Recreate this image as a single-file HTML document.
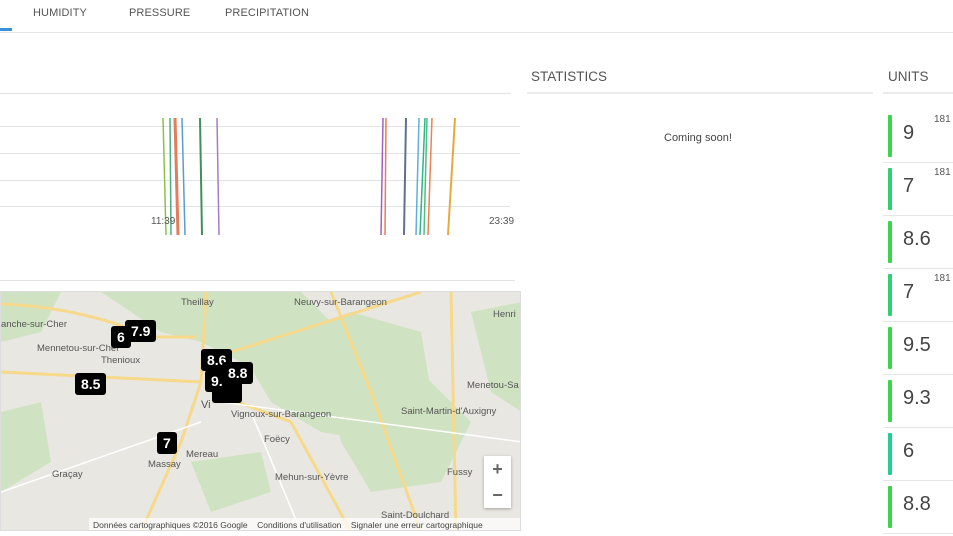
<!DOCTYPE html>
<html><head><meta charset="utf-8"><style>
*{margin:0;padding:0;box-sizing:border-box}
body{width:953px;height:536px;overflow:hidden;background:#fff;font-family:"Liberation Sans",sans-serif;position:relative;color:#444}
.abs{position:absolute}
.tab{position:absolute;top:7px;font-size:11px;color:#555;letter-spacing:.1px}
.h{position:absolute;font-size:13.5px;color:#555}
.row{position:absolute;left:883px;width:70px;height:53px;border-bottom:1px solid #e6e6e6}
.bar{position:absolute;left:5px;top:5px;width:4px;height:42px;background:#3ad64a;border-radius:1px}
.num{position:absolute;left:20px;top:12px;font-size:20px;color:#444}
.sup{position:absolute;left:51px;top:4px;font-size:10px;color:#555}
.mk{position:absolute;background:#000;color:#fff;font-weight:bold;font-size:14px;border-radius:3px;padding:3px 6px;line-height:16px}
.ml{position:absolute;font-size:9.5px;color:#555;white-space:nowrap}
</style></head><body>
<div class="tab" style="left:33px">HUMIDITY</div>
<div class="tab" style="left:129px">PRESSURE</div>
<div class="tab" style="left:225px">PRECIPITATION</div>
<div class="abs" style="left:0;top:32px;width:953px;height:1px;background:#e4e4e4"></div>
<div class="abs" style="left:0;top:28px;width:12px;height:3px;background:#3b8fd6"></div>

<svg class="abs" style="left:0;top:85px" width="522" height="200">
<g stroke="#e3e3e3" stroke-width="1">
<line x1="0" y1="8.5" x2="511" y2="8.5"/><line x1="0" y1="41.5" x2="520" y2="41.5"/><line x1="0" y1="68.5" x2="520" y2="68.5"/><line x1="0" y1="95.5" x2="520" y2="95.5"/><line x1="0" y1="121.5" x2="510" y2="121.5"/><line x1="0" y1="195.5" x2="515" y2="195.5"/>
</g>
<g stroke-width="1.5" fill="none">
<line x1="163" y1="33" x2="166" y2="150" stroke="#8bc34a"/>
<line x1="170" y1="33" x2="171" y2="150" stroke="#4caf80"/>
<line x1="175" y1="33" x2="178" y2="150" stroke="#e57c5b" stroke-width="3"/>
<line x1="182" y1="33" x2="185" y2="150" stroke="#5b9bd5"/>
<line x1="200" y1="33" x2="202" y2="150" stroke="#3f8f5f" stroke-width="2"/>
<line x1="217" y1="33" x2="219" y2="150" stroke="#a57cc8"/>
<line x1="383" y1="33" x2="381" y2="150" stroke="#a060c0"/>
<line x1="386" y1="33" x2="385" y2="150" stroke="#e57c5b"/>
<line x1="406" y1="33" x2="404" y2="150" stroke="#607090" stroke-width="2"/>
<line x1="419" y1="33" x2="416" y2="150" stroke="#5bb0e0"/>
<line x1="425" y1="33" x2="420" y2="150" stroke="#2fb58a"/>
<line x1="427" y1="33" x2="424" y2="150" stroke="#4cc080"/>
<line x1="432" y1="33" x2="428" y2="150" stroke="#f08050"/>
<line x1="455" y1="33" x2="448" y2="150" stroke="#e8a840" stroke-width="2"/>
</g>
<text x="151" y="139" font-size="10" fill="#555" font-family="Liberation Sans">11:39</text>
<text x="489" y="139" font-size="10" fill="#555" font-family="Liberation Sans">23:39</text>
</svg>

<div class="h" style="left:531px;top:69px">STATISTICS</div>
<div class="abs" style="left:527px;top:92px;width:346px;height:2px;background:#ececec"></div>
<div class="abs" style="left:664px;top:132px;font-size:11px;color:#444">Coming soon!</div>
<div class="h" style="left:888px;top:69px">UNITS</div>
<div class="abs" style="left:883px;top:92px;width:70px;height:2px;background:#ececec"></div>

<div class="row" style="top:110px"><div class="bar"></div><div class="num">9</div><div class="sup">181</div></div>
<div class="row" style="top:163px"><div class="bar" style="background:#2fd070"></div><div class="num">7</div><div class="sup">181</div></div>
<div class="row" style="top:216px"><div class="bar"></div><div class="num">8.6</div></div>
<div class="row" style="top:269px"><div class="bar" style="background:#2fd070"></div><div class="num">7</div><div class="sup">181</div></div>
<div class="row" style="top:322px"><div class="bar"></div><div class="num">9.5</div></div>
<div class="row" style="top:375px"><div class="bar"></div><div class="num">9.3</div></div>
<div class="row" style="top:428px"><div class="bar" style="background:#20d090"></div><div class="num">6</div></div>
<div class="row" style="top:481px"><div class="bar"></div><div class="num">8.8</div></div>

<div class="abs" style="left:0;top:291px;width:521px;height:240px;border:1px solid #ddd;overflow:hidden;background:#e9e7e1">
<svg width="521" height="240" style="position:absolute;left:0;top:0">
<g fill="#cfe3c2">
<path d="M100 0 L300 0 L330 30 L310 60 L240 70 L200 50 L160 40 Z"/>
<path d="M240 60 L350 20 L420 40 L430 100 L380 150 L320 140 L270 110 Z"/>
<path d="M330 100 L420 80 L470 130 L440 190 L370 200 L340 150 Z"/>
<path d="M470 20 L521 10 L521 120 L490 100 Z"/>
<path d="M0 0 L60 0 L40 40 L0 50 Z"/>
<path d="M0 120 L40 110 L50 170 L0 200 Z"/>
<path d="M190 170 L260 160 L270 200 L210 220 Z"/>
</g>
<g stroke="#f6d98a" stroke-width="3" fill="none">
<path d="M0 12 Q80 15 150 45 L195 45"/>
<path d="M205 0 L200 90 L180 150 L140 240"/>
<path d="M330 0 L370 100 L420 240"/>
<path d="M210 100 L290 130 L350 240"/>
<path d="M230 60 L420 0"/>
<path d="M450 0 L455 240"/>
<path d="M0 80 L200 90"/>
</g>
<g stroke="#fff" stroke-width="1.5" fill="none">
<path d="M220 110 L521 150"/><path d="M0 200 L200 130"/><path d="M250 120 L300 240"/>
</g>
</svg>
<div class="ml" style="left:180px;top:5px">Theillay</div>
<div class="ml" style="left:293px;top:5px">Neuvy-sur-Barangeon</div>
<div class="ml" style="left:492px;top:17px">Henri</div>
<div class="ml" style="left:0;top:27px">anche-sur-Cher</div>
<div class="ml" style="left:36px;top:51px">Mennetou-sur-Cher</div>
<div class="ml" style="left:100px;top:63px">Thenioux</div>
<div class="ml" style="left:466px;top:88px">Menetou-Sa</div>
<div class="ml" style="left:230px;top:117px">Vignoux-sur-Barangeon</div>
<div class="ml" style="left:400px;top:114px">Saint-Martin-d'Auxigny</div>
<div class="ml" style="left:263px;top:142px">Foëcy</div>
<div class="ml" style="left:185px;top:157px">Mereau</div>
<div class="ml" style="left:147px;top:167px">Massay</div>
<div class="ml" style="left:51px;top:177px">Graçay</div>
<div class="ml" style="left:274px;top:180px">Mehun-sur-Yèvre</div>
<div class="ml" style="left:446px;top:175px">Fussy</div>
<div class="ml" style="left:380px;top:218px">Saint-Doulchard</div>
<div class="ml" style="left:200px;top:107px;font-size:11px">Vi</div>
<div class="abs" style="left:483px;top:164px;width:27px;height:52px;background:#fff;box-shadow:0 1px 3px rgba(0,0,0,.3);font-size:18px;color:#666;text-align:center;line-height:26px;font-weight:bold">+<br>−</div>
<div class="abs" style="left:88px;top:226px;width:433px;height:14px;background:rgba(255,255,255,.7);font-size:8.5px;color:#444;padding:2px 4px;white-space:nowrap">Données cartographiques ©2016 Google &nbsp;&nbsp; Conditions d'utilisation &nbsp;&nbsp; Signaler une erreur cartographique</div>
<div class="mk" style="left:110px;top:34px">6</div>
<div class="mk" style="left:124px;top:28px">7.9</div>
<div class="mk" style="left:74px;top:81px">8.5</div>
<div class="mk" style="left:200px;top:57px">8.6</div>
<div class="mk" style="left:211px;top:87px;height:24px;width:30px"> </div>
<div class="mk" style="left:204px;top:78px">9.</div>
<div class="mk" style="left:221px;top:70px">8.8</div>
<div class="mk" style="left:156px;top:140px">7</div>
</div>
</body></html>
